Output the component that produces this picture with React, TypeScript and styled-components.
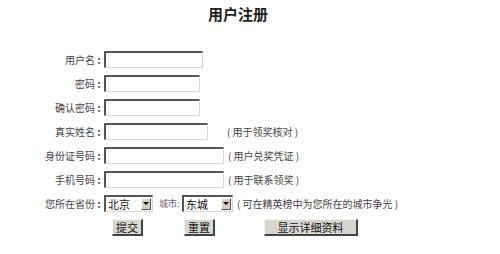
import React from 'react'
import styled, { createGlobalStyle } from 'styled-components'

const Global = createGlobalStyle`
  body {
    margin: 0;
    background: #fff;
    font-family: "Noto Sans CJK SC", "Liberation Sans", sans-serif;
    color: #333;
  }
`

const Page = styled.div`
  width: 500px;
  height: 254px;
  display: flex;
  flex-direction: column;
`

const Title = styled.h1`
  margin: 0;
  padding-top: 5px;
  height: 47px;
  box-sizing: border-box;
  font-size: 15px;
  font-weight: bold;
  line-height: 18px;
  text-align: center;
  color: #222;
  padding-right: 24px;
`

const Row = styled.div`
  display: flex;
  align-items: center;
  height: 24px;
`

const Label = styled.span`
  width: 95px;
  text-align: right;
  font-size: 10px;
  color: #444;
  white-space: nowrap;
`

const Colon = styled.span`
  width: 9px;
  text-align: center;
  font-size: 11px;
  font-weight: bold;
  color: #555;
  padding-right: 1px;
  box-sizing: border-box;
`

const Field = styled.span<{ w: number }>`
  display: inline-block;
  width: ${p => p.w}px;
  height: 17px;
  box-sizing: border-box;
  border-top: 2px solid #555;
  border-left: 2px solid #555;
  border-bottom: 1px solid #d8d8d8;
  border-right: 1px solid #d8d8d8;
  background: #fff;
`

const Note = styled.span<{ gap: number }>`
  margin-left: ${p => p.gap}px;
  font-size: 10px;
  color: #444;
  white-space: pre;
`

const Select = styled.span<{ w: number }>`
  display: inline-flex;
  align-items: center;
  justify-content: space-between;
  width: ${p => p.w}px;
  height: 17px;
  box-sizing: border-box;
  border-top: 2px solid #555;
  border-left: 2px solid #555;
  border-bottom: 1px solid #d8d8d8;
  border-right: 1px solid #d8d8d8;
  padding: 0 1px 0 2px;
  font-size: 11px;
  line-height: 14px;
  color: #111;
`

const Arrow = styled.span`
  width: 10px;
  height: 12px;
  box-sizing: border-box;
  background: #d4d0c8;
  border-top: 1px solid #fff;
  border-left: 1px solid #fff;
  border-bottom: 1px solid #555;
  border-right: 1px solid #555;
  display: flex;
  align-items: center;
  justify-content: center;
  &::after {
    content: '';
    border-left: 3px solid transparent;
    border-right: 3px solid transparent;
    border-top: 3px solid #000;
  }
`

const Small = styled.span`
  margin-left: 6px;
  font-size: 9px;
  color: #666;
  width: 23px;
  white-space: nowrap;
`

const Buttons = styled.div`
  display: flex;
  align-items: center;
  height: 24px;
  padding-left: 112px;
`

const Button = styled.span<{ w: number; gap: number }>`
  display: inline-flex;
  align-items: center;
  justify-content: center;
  margin-left: ${p => p.gap}px;
  width: ${p => p.w}px;
  height: 17px;
  box-sizing: border-box;
  background: #d8d6d0;
  border-top: 1px solid #f4f4f4;
  border-left: 1px solid #f4f4f4;
  border-bottom: 2px solid #444;
  border-right: 2px solid #444;
  font-size: 11px;
  color: #111;
`

const rows = [
  { label: '用户名', w: 99 },
  { label: '密码', w: 96 },
  { label: '确认密码', w: 96 },
  { label: '真实姓名', w: 104, note: '( 用于领奖核对 )', gap: 19 },
  { label: '身份证号码', w: 120, note: '( 用户兑奖凭证 )', gap: 4 },
  { label: '手机号码', w: 120, note: '( 用于联系领奖 )', gap: 4 },
]

export default function App() {
  return (
    <Page>
      <Global />
      <Title>用户注册</Title>
      {rows.map((r, i) => (
        <Row key={i}>
          <Label>{r.label}</Label>
          <Colon>:</Colon>
          <Field w={r.w} />
          {r.note && <Note gap={r.gap!}>{r.note}</Note>}
        </Row>
      ))}
      <Row>
        <Label>您所在省份</Label>
        <Colon>:</Colon>
        <Select w={49}>北京<Arrow /></Select>
        <Small>城市:</Small>
        <Select w={51}>东城<Arrow /></Select>
        <Note gap={4}>( 可在精英榜中为您所在的城市争光 )</Note>
      </Row>
      <Buttons>
        <Button w={31} gap={0}>提交</Button>
        <Button w={31} gap={41}>重置</Button>
        <Button w={94} gap={49}>显示详细资料</Button>
      </Buttons>
    </Page>
  )
}
